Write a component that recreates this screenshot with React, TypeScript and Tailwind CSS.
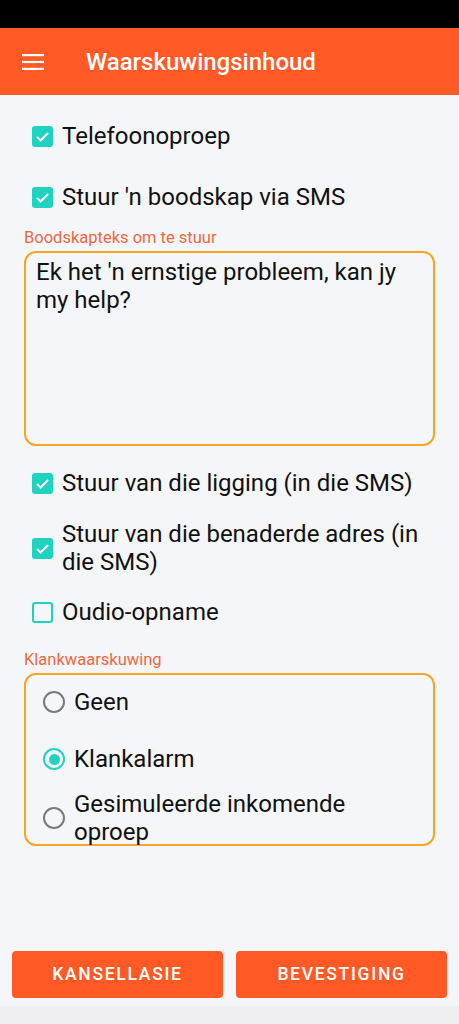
import { useState } from "react";

const font = { fontFamily: "Roboto, 'Noto Sans', sans-serif" };

function Check({ checked }: { checked: boolean }) {
  return checked ? (
    <span className="flex h-[21px] w-[21px] shrink-0 items-center justify-center rounded-[3px] bg-[#1fd3c0]">
      <svg viewBox="0 0 24 24" className="h-[19px] w-[19px]" fill="none" stroke="white" strokeWidth="2.6">
        <path d="M5 12.5l4.5 4.5L19 7.5" />
      </svg>
    </span>
  ) : (
    <span className="h-[21px] w-[21px] shrink-0 rounded-[3px] border-2 border-[#1fd3c0]" />
  );
}

function Radio({ on }: { on: boolean }) {
  return on ? (
    <span className="flex h-[22px] w-[22px] shrink-0 items-center justify-center rounded-full border-2 border-[#1fd3c0]">
      <span className="h-[11px] w-[11px] rounded-full bg-[#1fd3c0]" />
    </span>
  ) : (
    <span className="h-[22px] w-[22px] shrink-0 rounded-full border-2 border-[#7a7a7a]" />
  );
}

function CheckRow({ label, checked, className = "" }: { label: string; checked: boolean; className?: string }) {
  return (
    <div className={`flex items-center gap-[9px] pl-[8px] pr-[14px] ${className}`}>
      <Check checked={checked} />
      <span className="text-[24px] leading-[28px] text-[#111]">{label}</span>
    </div>
  );
}

export default function App() {
  const [sound] = useState("alarm");
  const options = [
    { id: "none", label: "Geen", cls: "mt-[13px]" },
    { id: "alarm", label: "Klankalarm", cls: "mt-[29px]" },
    { id: "call", label: "Gesimuleerde inkomende oproep", cls: "mt-[17px]" },
  ];

  return (
    <div className="flex h-[1024px] w-full flex-col bg-[#f5f6fa]" style={font}>
      <div className="h-[28px] bg-black" />
      <header className="flex h-[67px] items-center bg-[#ff5a26] pl-[22px]">
        <svg viewBox="0 0 22 16" className="h-[16px] w-[22px]" fill="white">
          <rect x="0" y="0" width="22" height="2.2" />
          <rect x="0" y="6.9" width="22" height="2.2" />
          <rect x="0" y="13.8" width="22" height="2.2" />
        </svg>
        <h1 className="ml-[42px] text-[24px] font-medium text-white">Waarskuwingsinhoud</h1>
      </header>

      <main className="flex flex-col px-[24px]">
        <CheckRow label="Telefoonoproep" checked className="mt-[27px]" />
        <CheckRow label="Stuur 'n boodskap via SMS" checked className="mt-[33px]" />

        <label className="mt-[17px] text-[16.5px] leading-[20px] text-[#ec6a3f]">Boodskapteks om te stuur</label>
        <div className="mt-[3px] h-[195px] rounded-[12px] border-2 border-[#f5a623] pl-[10px] pr-[30px] pt-[5px] text-[24px] leading-[28px] text-[#111]">
          Ek het 'n ernstige probleem, kan jy my help?
        </div>

        <CheckRow label="Stuur van die ligging (in die SMS)" checked className="mt-[23px]" />
        <CheckRow label="Stuur van die benaderde adres (in die SMS)" checked className="mt-[23px]" />
        <CheckRow label="Oudio-opname" checked={false} className="mt-[22px]" />

        <label className="mt-[24px] text-[16.5px] leading-[20px] text-[#ec6a3f]">Klankwaarskuwing</label>
        <div className="mt-[3px] flex h-[173px] flex-col rounded-[12px] border-2 border-[#f5a623] pl-[17px] pr-[60px]">
          {options.map((o) => (
            <div key={o.id} className={`flex shrink-0 items-center gap-[9px] ${o.cls}`}>
              <Radio on={sound === o.id} />
              <span className="text-[24px] leading-[28px] text-[#111]">{o.label}</span>
            </div>
          ))}
        </div>
      </main>

      <div className="mt-auto flex gap-[13px] px-[12px] pb-[8px]">
        <button className="h-[47px] flex-1 rounded-[4px] bg-[#ff5a26] text-[17.5px] font-medium tracking-[1.7px] text-white">
          KANSELLASIE
        </button>
        <button className="h-[47px] flex-1 rounded-[4px] bg-[#ff5a26] text-[17.5px] font-medium tracking-[1.7px] text-white">
          BEVESTIGING
        </button>
      </div>
      <div className="h-[18px] bg-[#efeff1]" />
    </div>
  );
}
